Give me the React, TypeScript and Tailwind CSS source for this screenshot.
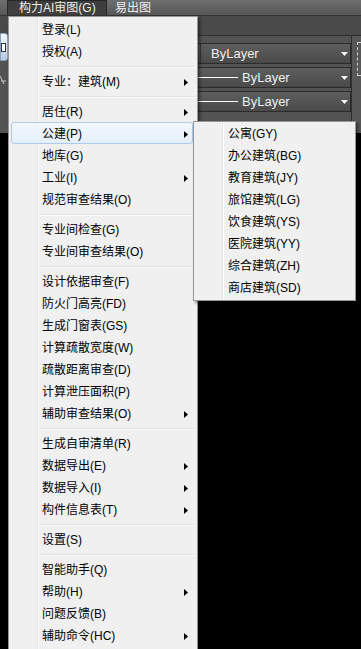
import React from "react";

type Item = { label: string; arrow?: boolean; active?: boolean } | "sep";

const MAIN: Item[] = [
  { label: "登录(L)" },
  { label: "授权(A)" },
  "sep",
  { label: "专业：建筑(M)", arrow: true },
  "sep",
  { label: "居住(R)", arrow: true },
  { label: "公建(P)", arrow: true, active: true },
  { label: "地库(G)" },
  { label: "工业(I)", arrow: true },
  { label: "规范审查结果(O)" },
  "sep",
  { label: "专业间检查(G)" },
  { label: "专业间审查结果(O)" },
  "sep",
  { label: "设计依据审查(F)" },
  { label: "防火门高亮(FD)" },
  { label: "生成门窗表(GS)" },
  { label: "计算疏散宽度(W)" },
  { label: "疏散距离审查(D)" },
  { label: "计算泄压面积(P)" },
  { label: "辅助审查结果(O)", arrow: true },
  "sep",
  { label: "生成自审清单(R)" },
  { label: "数据导出(E)", arrow: true },
  { label: "数据导入(I)", arrow: true },
  { label: "构件信息表(T)", arrow: true },
  "sep",
  { label: "设置(S)" },
  "sep",
  { label: "智能助手(Q)" },
  { label: "帮助(H)", arrow: true },
  { label: "问题反馈(B)" },
  { label: "辅助命令(HC)", arrow: true },
];

const SUB = [
  "公寓(GY)",
  "办公建筑(BG)",
  "教育建筑(JY)",
  "旅馆建筑(LG)",
  "饮食建筑(YS)",
  "医院建筑(YY)",
  "综合建筑(ZH)",
  "商店建筑(SD)",
];

function Arrow() {
  return (
    <svg width="4" height="7" viewBox="0 0 4 7" className="absolute right-[9px] top-[8px]">
      <path d="M0 0 L4 3.5 L0 7 Z" fill="#000" />
    </svg>
  );
}

function MenuRow({ item }: { item: Item }) {
  if (item === "sep") {
    return (
      <div className="h-[8px] pl-[30px] pr-[2px] flex flex-col justify-center">
        <div className="h-px bg-[#e0e0e0]" />
        <div className="h-px bg-white" />
      </div>
    );
  }
  return (
    <div className="relative h-[22px] flex items-center pl-[33px]">
      {item.active && (
        <div className="absolute left-[2px] right-[4px] top-[-1px] bottom-[1px] rounded-[3px] border border-[#aecbef] bg-[linear-gradient(to_bottom,#f4f8fd,#e4eefb)]" />
      )}
      <span className="relative leading-none">{item.label}</span>
      {item.arrow && <Arrow />}
    </div>
  );
}

function DropDown({ line, text }: { line?: boolean; text: string }) {
  return (
    <div className="relative h-[21px] flex items-center border border-[#2c2c2c] bg-[linear-gradient(to_bottom,#5e5e5e,#4a4a4a)] text-[#eeeeee] text-[13px]">
      {line ? (
        <>
          <div className="w-[75px] h-px bg-white ml-[2px]" />
          <span className="ml-[4px]">{text}</span>
        </>
      ) : (
        <>
          <div className="w-[40px] h-full border-r border-[#3a3a3a]" />
          <span className="ml-[10px]">{text}</span>
        </>
      )}
      <svg width="7" height="4" viewBox="0 0 7 4" className="absolute right-[2px] top-[8px]">
        <path d="M0 0 L7 0 L3.5 4 Z" fill="#f4f4f4" />
      </svg>
    </div>
  );
}

export default function App() {
  return (
    <div className="relative w-[361px] h-[649px] bg-black overflow-hidden font-['Liberation_Sans','Noto_Sans_CJK_SC',sans-serif] text-[12px]">
      {/* menu bar */}
      <div className="h-[16px] flex items-stretch bg-[linear-gradient(to_bottom,#6e6e6e,#575757)] border-b border-[#343434] text-[#ececec] text-[12px]">
        <div className="ml-[7px] w-[100px] bg-[#3f3f3f] border-x border-t border-[#262626] pl-[11px] flex items-center leading-none">
          构力AI审图(G)
        </div>
        <div className="ml-[8px] flex items-center leading-none">易出图</div>
      </div>

      {/* toolbar band */}
      <div className="h-[20px] bg-[#4a4a4a] border-b border-[#2f2f2f]" />

      {/* property panel */}
      <div className="h-[97px] flex bg-[#535353]">
        <div className="w-[8px] flex flex-col items-start">
          <div className="w-[8px] h-[28px] mt-[-3px] rounded-r-[3px] bg-[linear-gradient(to_bottom,#f2f6fb,#b7c9e0)] border border-[#8aa2c0] flex items-center">
            <div className="w-[5px] h-[9px] border border-[#333] bg-white" />
          </div>
          <svg width="8" height="10" viewBox="0 0 8 10" className="mt-[14px]">
            <path d="M0 1 L4 9 M1 6 L6 6" stroke="#c8c8c8" strokeWidth="1" fill="none" />
          </svg>
        </div>
        <div className="w-[152px]" />
        <div className="w-[191px] flex flex-col gap-[3px] pt-[7px]">
          <DropDown text="ByLayer" />
          <DropDown line text="ByLayer" />
          <DropDown line text="ByLayer" />
        </div>
        <div className="w-[10px] border-l border-[#2f2f2f] bg-[#575757] pl-[5px] pt-[6px]">
          <div className="w-[6px] h-[34px] border border-dashed border-[#cfcfcf] border-r-0" />
        </div>
      </div>

      {/* main dropdown menu */}
      <div className="absolute left-[8px] top-[16px] w-[190px] h-[640px] border border-[#979797] bg-[linear-gradient(to_right,#f0f0f0_28px,#e2e3e3_28px,#e2e3e3_29px,#ffffff_29px,#ffffff_30px,#f0f0f0_30px)] pt-[2px] text-black shadow-[2px_2px_3px_rgba(0,0,0,0.45)]">
        {MAIN.map((it, i) => (
          <MenuRow key={i} item={it} />
        ))}
      </div>

      {/* submenu */}
      <div className="absolute left-[193px] top-[121px] w-[163px] border border-[#979797] bg-[linear-gradient(to_right,#f0f0f0_28px,#e2e3e3_28px,#e2e3e3_29px,#ffffff_29px,#ffffff_30px,#f0f0f0_30px)] py-[1px] text-black shadow-[2px_2px_3px_rgba(0,0,0,0.45)]">
        {SUB.map((s) => (
          <div key={s} className="h-[22px] flex items-center pl-[34px] leading-none">
            {s}
          </div>
        ))}
      </div>
    </div>
  );
}
